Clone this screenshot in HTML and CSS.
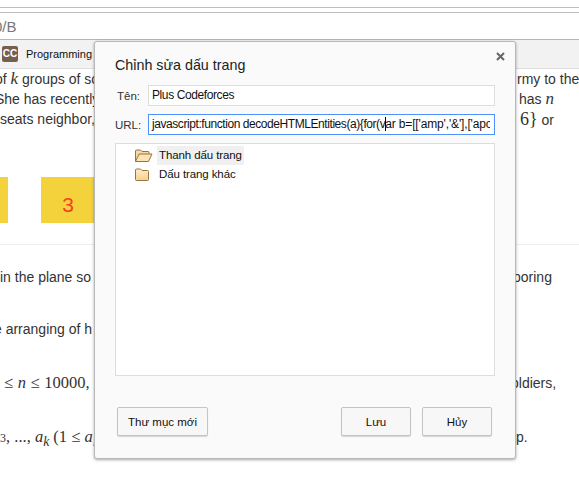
FILE: index.html
```html
<!DOCTYPE html>
<html lang="vi">

<head>
    <meta charset="UTF-8">
    <title>Chỉnh sửa dấu trang</title>
    <link rel="stylesheet" href="styles.css">
</head>

<body>
    <div class="tabstrip"></div>
    <div class="addressbar">0/B</div>
    <div class="bookmarks">
        <span class="cc">CC</span>
        <span>Programming</span>
    </div>

    <div class="page">
        <div class="line">
            <span class="left cut-of">of <i class="var">k</i> groups of so</span>
            <span></span>
            <span class="right army">rmy to the</span>
        </div>
        <div class="line">
            <span class="left cut-she">She has recently</span>
            <span></span>
            <span class="right has">has <i class="var">n</i></span>
        </div>
        <div class="line">
            <span class="left">seats neighbor,</span>
            <span></span>
            <span class="right six"><span class="math">, 6}</span> or</span>
        </div>

        <div class="squares">
            <div class="square first"></div>
            <div class="square">3</div>
        </div>
        <hr class="rule">

        <div class="line l4">
            <span class="left">in the plane so</span>
            <span></span>
            <span class="right boring">boring</span>
        </div>
        <div class="line l5">
            <span class="left cut-e">e arranging of h</span>
        </div>
        <div class="line l6">
            <span class="left math range">≤ <i>n</i> ≤ 10000,</span>
            <span></span>
            <span class="right soldiers">oldiers,</span>
        </div>
        <div class="line l7">
            <span class="left math list"><small>3</small>, ..., <i>a<sub>k</sub></i> (1 ≤ <i>a<sub>i</sub></i></span>
            <span></span>
            <span class="right end">p.</span>
        </div>
    </div>

    <div class="dialog">
        <button class="close">
            <svg width="9" height="9" viewBox="0 0 9 9">
                <path d="M1 1l7 7M8 1l-7 7" stroke="#666" stroke-width="2"/>
            </svg>
        </button>
        <h1>Chỉnh sửa dấu trang</h1>
        <div class="row">
            <label>Tên:</label>
            <div class="field">Plus Codeforces</div>
        </div>
        <div class="row">
            <label>URL:</label>
            <div class="field focus">javascript:function decodeHTMLEntities(a){for(v<span class="caret"></span><span class="tail">ar b=[['amp','&amp;'],['apos','\''],['gt','&gt;']</span></div>
        </div>
        <div class="tree">
            <div class="node">
                <svg class="folder" width="19" height="13" viewBox="0 0 19 13">
                    <path d="M1.5 12.5V2a1 1 0 0 1 1-1h4l1.500 1.500h6a1 1 0 0 1 1 1V5" fill="#f3d9a6" stroke="#9a7440"/>
                    <path d="M1.5 12.5h13l3.500-7.500H5z" fill="#fbe3b4" stroke="#9a7440" stroke-linejoin="round"/>
                </svg>
                <span class="name on">Thanh dấu trang</span>
            </div>
            <div class="node">
                <svg class="folder" width="19" height="13" viewBox="0 0 19 13">
                    <defs>
                        <linearGradient id="fold" x1="0" y1="0" x2="0" y2="1">
                            <stop offset="0" stop-color="#fdeecb"/>
                            <stop offset="1" stop-color="#f6cf8e"/>
                        </linearGradient>
                    </defs>
                    <path d="M1.500 11.500V2a1 1 0 0 1 1-1h4l1.500 1.500h5.500a1 1 0 0 1 1 1v8a1 1 0 0 1-1 1h-11a1 1 0 0 1-1-1z" fill="url(#fold)" stroke="#9a7440"/>
                </svg>
                <span class="name">Dấu trang khác</span>
            </div>
        </div>
        <div class="actions">
            <button class="btn newfolder">Thư mục mới</button>
            <button class="btn">Lưu</button>
            <button class="btn">Hủy</button>
        </div>
    </div>
</body>

</html>
```

FILE: styles.css
```css
body,
html {
    margin: 0;
    padding: 0;
}

* {
    box-sizing: border-box;
}

body {
    width: 579px;
    height: 479px;
    overflow: hidden;
    background: #fff;
    font-family: "Liberation Sans", Arial, sans-serif;
    color: #333;
}

.tabstrip {
    height: 6px;
    margin-top: 7px;
    border-top: 1px solid #bdbdbd;
    border-bottom: 1px solid #bdbdbd;
}

.addressbar {
    height: 27px;
    margin-left: -6px;
    padding-top: 4px;
    font-size: 15px;
    line-height: 20px;
    color: #777;
    border-bottom: 1px solid #b5b5b5;
}

.bookmarks {
    display: flex;
    align-items: center;
    gap: 8px;
    height: 29px;
    padding-left: 2px;
    background: #f2f2f2;
    border-bottom: 1px solid #ddd;
    font-size: 11px;
    color: #111;
}

.cc {
    width: 16px;
    height: 16px;
    border-radius: 2px;
    background: #75604f;
    color: #fff;
    font-size: 10px;
    font-weight: bold;
    line-height: 16px;
    text-align: center;
}

.page {
    font-size: 14px;
    line-height: 20px;
}

.line {
    display: grid;
    grid-template-columns: 95px 420px 64px;
    white-space: nowrap;
}

.var {
    font-family: "Liberation Serif", serif;
    font-size: 17px;
}

.left,
.right {
    overflow: hidden;
}

.cut-of {
    text-indent: -5px;
}

.cut-she {
    text-indent: -5px;
}

.cut-e {
    text-indent: -6px;
}

.right.army {
    padding-left: 2px;
}

.right.has {
    padding-left: 4px;
}

.right.six {
    text-indent: -4px;
}

.right.six .math {
    font-size: 18px;
}

.right.boring {
    text-indent: -2px;
}

.right.soldiers {
    text-indent: -4px;
}

.right.end {
    padding-left: 1px;
}

.math {
    font-family: "Liberation Serif", serif;
    font-size: 16.500px;
}

.math small {
    font-size: 12px;
}

.squares {
    display: flex;
    gap: 33px;
    margin-top: 47px;
}

.square {
    width: 54px;
    height: 46px;
    background: #f3d23c;
    color: #f8401f;
    font-size: 21px;
    line-height: 56px;
    text-align: center;
}

.square.first {
    width: 8px;
}

.rule {
    height: 1px;
    margin: 21px 0 0;
    border: 0;
    background: #eee;
}

.l4 {
    margin-top: 22px;
}

.l5 {
    margin-top: 32px;
}

.l6 {
    margin-top: 34px;
}

.l7 {
    margin-top: 34px;
}

.range {
    text-indent: 4px;
    word-spacing: .5px;
}

.dialog {
    position: absolute;
    left: 94px;
    top: 41px;
    width: 422px;
    height: 418px;
    padding: 0 20px;
    background: #fafafa;
    border: 1px solid #b8b8b8;
    border-radius: 3px;
    box-shadow: 0 1px 3px rgba(0, 0, 0, .35);
    font-size: 12px;
    color: #111;
}

.close {
    position: absolute;
    right: 10px;
    top: 10px;
    display: flex;
    padding: 0;
    border: 0;
    background: none;
}

h1 {
    margin: 0;
    padding-top: 14px;
    height: 43px;
    font-size: 14.300px;
    line-height: 18px;
    font-weight: normal;
    color: #222;
}

.row {
    display: flex;
    align-items: center;
    height: 20px;
    margin-bottom: 9px;
}

label {
    width: 33px;
    padding: 1px 8px 0 0;
    font-size: 11.500px;
    text-align: right;
    color: #333;
}

.field {
    width: 347px;
    height: 21px;
    padding: 0 3px;
    overflow: hidden;
    white-space: nowrap;
    background: #fff;
    border: 1px solid #ddd;
    letter-spacing: -.4px;
    line-height: 19px;
}

.field.focus {
    border-color: #4d90fe;
    letter-spacing: -.43px;
}

.tail {
    display: inline-block;
    width: 105px;
    overflow: hidden;
    vertical-align: top;
    letter-spacing: -.15px;
}

.caret {
    display: inline-block;
    width: 1px;
    height: 14px;
    margin-right: -1px;
    vertical-align: -3px;
    background: #000;
}

.tree {
    height: 233px;
    padding: 2px 0 0 18px;
    background: #fff;
    border: 1px solid #ddd;
}

.node {
    display: flex;
    align-items: center;
    gap: 4px;
    height: 19px;
}

.folder {
    flex: none;
}

.name {
    padding: 0 2px;
    font-size: 11.500px;
    letter-spacing: -.1px;
    line-height: 19px;
}

.name.on {
    background: #f0f0f0;
}

.actions {
    display: flex;
    gap: 11px;
    margin-top: 31px;
    padding: 0 3px 0 2px;
}

.btn {
    width: 70px;
    height: 29px;
    padding: 0;
    background: #f7f7f7;
    border: 1px solid #c4c4c4;
    border-radius: 2px;
    box-shadow: 0 1px 1px rgba(0, 0, 0, .15);
    font-family: inherit;
    font-size: 11.500px;
    color: #111;
}

.btn.newfolder {
    width: 91px;
    margin-right: auto;
}
```
